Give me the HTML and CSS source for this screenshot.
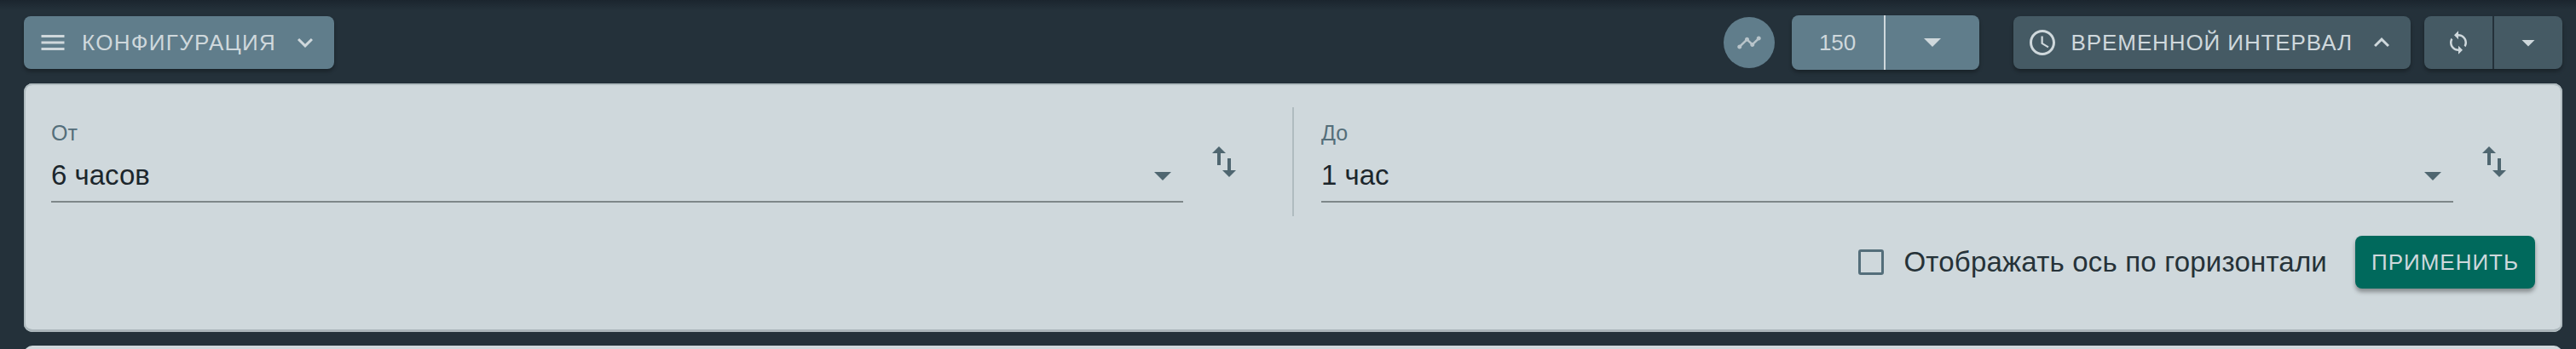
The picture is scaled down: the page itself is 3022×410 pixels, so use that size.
FILE: index.html
```html
<!DOCTYPE html>
<html lang="en">

<head>
    <meta charset="UTF-8">
    <meta name="viewport" content="width=device-width, initial-scale=1.0">
    <title>Конфигурация</title>
    <link rel="stylesheet" href="styles.css">
</head>

<body>
    <div class="toolbar">
        <button class="btn btn-light">
            <svg class="icon" viewBox="0 0 24 24"><path d="M3 18h18v-2H3v2zm0-5h18v-2H3v2zm0-7v2h18V6H3z"/></svg>
            <span class="btn-text config-text">КОНФИГУРАЦИЯ</span>
            <svg class="icon" viewBox="0 0 24 24"><path d="M16.59 8.59L12 13.17 7.41 8.59 6 10l6 6 6-6z"/></svg>
        </button>

        <div class="toolbar-right">
            <button class="round-btn">
                <svg class="icon-small" viewBox="0 0 24 24"><path d="M23 8c0 1.1-.9 2-2 2-.18 0-.35-.02-.51-.07l-3.56 3.55c.05.16.07.34.07.52 0 1.1-.9 2-2 2s-2-.9-2-2c0-.18.02-.36.07-.52l-2.55-2.55c-.16.05-.34.07-.52.07s-.36-.02-.52-.07l-4.55 4.56c.05.16.07.33.07.51 0 1.1-.9 2-2 2s-2-.9-2-2 .9-2 2-2c.18 0 .35.02.51.07l4.56-4.55C8.02 9.36 8 9.18 8 9c0-1.1.9-2 2-2s2 .9 2 2c0 .18-.02.36-.07.52l2.55 2.55c.16-.05.34-.07.52-.07s.36.02.52.07l3.55-3.56C19.02 8.35 19 8.18 19 8c0-1.1.9-2 2-2s2 .9 2 2z"/></svg>
            </button>
            <div class="split split-light">
                <button class="split-main count">150</button>
                <button class="split-arrow arrow-wide">
                    <svg class="icon-arrow" viewBox="0 0 24 24"><path d="M7 10l5 5 5-5z"/></svg>
                </button>
            </div>
            <button class="btn btn-dark">
                <svg class="icon" viewBox="0 0 24 24"><path d="M11.99 2C6.47 2 2 6.48 2 12s4.47 10 9.99 10C17.52 22 22 17.52 22 12S17.52 2 11.99 2zM12 20c-4.42 0-8-3.58-8-8s3.58-8 8-8 8 3.58 8 8-3.58 8-8 8z"/><path d="M12.5 7H11v6l5.25 3.15.75-1.23-4.5-2.67z"/></svg>
                <span class="btn-text interval-text">ВРЕМЕННОЙ ИНТЕРВАЛ</span>
                <svg class="icon" viewBox="0 0 24 24"><path d="M12 8l-6 6 1.41 1.41L12 10.83l4.59 4.58L18 14z"/></svg>
            </button>
            <div class="split split-dark">
                <button class="split-main refresh">
                    <svg class="icon-small" viewBox="0 0 24 24"><path d="M12 4V1L8 5l4 4V6c3.31 0 6 2.69 6 6 0 1.01-.25 1.97-.7 2.8l1.46 1.46C19.54 15.03 20 13.57 20 12c0-4.42-3.58-8-8-8zm0 14c-3.31 0-6-2.69-6-6 0-1.01.25-1.97.7-2.8L5.24 7.74C4.46 8.97 4 10.43 4 12c0 4.42 3.58 8 8 8v3l4-4-4-4v3z"/></svg>
                </button>
                <button class="split-arrow arrow-narrow">
                    <svg class="icon" viewBox="0 0 24 24"><path d="M7 10l5 5 5-5z"/></svg>
                </button>
            </div>
        </div>
    </div>

    <div class="panel">
        <div class="range">
            <div class="field">
                <label class="field-label">От</label>
                <div class="field-value">
                    <span>6 часов</span>
                    <svg class="field-arrow" viewBox="0 0 24 24"><path d="M7 10l5 5 5-5z"/></svg>
                </div>
            </div>
            <svg class="swap" viewBox="0 0 24 24"><path d="M16 17.01V10h-2v7.01h-3L15 21l4-3.99h-3zM9 3L5 6.99h3V14h2V6.99h3L9 3z"/></svg>
            <div class="range-divider"></div>
            <div class="field">
                <label class="field-label">До</label>
                <div class="field-value">
                    <span>1 час</span>
                    <svg class="field-arrow" viewBox="0 0 24 24"><path d="M7 10l5 5 5-5z"/></svg>
                </div>
            </div>
            <svg class="swap" viewBox="0 0 24 24"><path d="M16 17.01V10h-2v7.01h-3L15 21l4-3.99h-3zM9 3L5 6.99h3V14h2V6.99h3L9 3z"/></svg>
        </div>
        <div class="actions">
            <div class="checkbox"></div>
            <span class="checkbox-label">Отображать ось по горизонтали</span>
            <button class="apply">ПРИМЕНИТЬ</button>
        </div>
    </div>

    <div class="next-card"></div>
</body>

</html>
```

FILE: styles.css
```css
html,
body {
    height: 410px;
    overflow: hidden;
}

body {
    margin: 0;
    background-color: #24313a;
    font-family: "Liberation Sans", Arial, sans-serif;
}

button {
    border: none;
    padding: 0;
    font-family: inherit;
    color: #cfd8dc;
}

svg {
    fill: currentColor;
    flex: none;
    display: block;
}

.toolbar {
    display: flex;
    justify-content: space-between;
    align-items: center;
    height: 98px;
    padding: 2px 16px 0 28px;
    box-sizing: border-box;
    background: linear-gradient(#1b252e 0, #24313a 12px);
}

.toolbar-right {
    display: flex;
    align-items: center;
}

.icon {
    width: 36px;
    height: 36px;
}

.icon-small {
    width: 30px;
    height: 30px;
}

.icon-arrow {
    width: 48px;
    height: 48px;
    margin-bottom: 2px;
}

.btn {
    display: flex;
    align-items: center;
    height: 62px;
    padding: 0 16px;
    border-radius: 8px;
    font-size: 26px;
    box-shadow: 0 3px 4px rgba(0, 0, 0, 0.3);
}

.btn-light {
    background-color: #607d8b;
}

.btn-dark {
    background-color: #455a64;
}

.btn-text {
    margin: 0 16px;
}

.config-text {
    letter-spacing: 1.3px;
}

.interval-text {
    letter-spacing: 0.9px;
}

.round-btn {
    display: flex;
    justify-content: center;
    align-items: center;
    width: 60px;
    height: 60px;
    margin-right: 20px;
    border-radius: 50%;
    background-color: #607d8b;
    color: #b8c4ca;
}

.split {
    display: flex;
    border-radius: 8px;
    overflow: hidden;
    box-shadow: 0 3px 4px rgba(0, 0, 0, 0.3);
}

.split-main,
.split-arrow {
    display: flex;
    justify-content: center;
    align-items: center;
    background: none;
}

.split-light {
    height: 64px;
    margin-right: 40px;
    background-color: #607d8b;
}

.split-dark {
    height: 62px;
    margin-left: 16px;
    background-color: #455a64;
}

.count {
    width: 110px;
    border-right: 2px solid #cfd8dc;
    font-size: 26px;
}

.arrow-wide {
    width: 110px;
}

.refresh {
    width: 82px;
    border-right: 2px solid #24313a;
}

.arrow-narrow {
    width: 80px;
}

.panel {
    width: 2978px;
    height: 292px;
    margin-left: 28px;
    box-sizing: border-box;
    padding: 28px 32px 0;
    border-radius: 10px;
    background-color: #cfd8dc;
    box-shadow: inset 2px 0 0 #b0bcc0, inset -2px 0 0 #b0bcc0, inset 0 -3px 0 #aab5ba, inset 0 2px 0 #b0bcc0;
}

.range {
    display: flex;
    height: 128px;
}

.field {
    flex: 1;
    height: 112px;
    box-sizing: border-box;
    border-bottom: 2px solid #7e8789;
}

.field-label {
    display: block;
    margin-top: 15px;
    font-size: 25px;
    line-height: 30px;
    color: #546e7a;
}

.field-value {
    display: flex;
    justify-content: space-between;
    align-items: center;
    margin-top: 11px;
    font-size: 33px;
    line-height: 48px;
    color: #1c262c;
}

.field-arrow {
    width: 48px;
    height: 48px;
    color: #4f6670;
}

.swap {
    width: 48px;
    height: 48px;
    margin: 40px 24px 0;
    color: #4f6670;
}

.range-divider {
    width: 2px;
    height: 128px;
    margin: 0 32px;
    background-color: #b0bcc0;
}

.actions {
    display: flex;
    justify-content: flex-end;
    align-items: center;
    margin-top: 23px;
}

.checkbox {
    width: 30px;
    height: 30px;
    box-sizing: border-box;
    border: 3px solid #546e7a;
    border-radius: 3px;
}

.checkbox-label {
    margin: 0 33px 0 23px;
    font-size: 33px;
    letter-spacing: 0.2px;
    color: #263238;
}

.apply {
    width: 211px;
    height: 62px;
    border-radius: 8px;
    background-color: #00695c;
    font-size: 26px;
    letter-spacing: 1px;
    box-shadow: 0 4px 5px rgba(0, 0, 0, 0.35);
}

.next-card {
    width: 2978px;
    height: 20px;
    margin: 16px 0 0 28px;
    border-radius: 10px 10px 0 0;
    background-color: #cfd8dc;
}
```
